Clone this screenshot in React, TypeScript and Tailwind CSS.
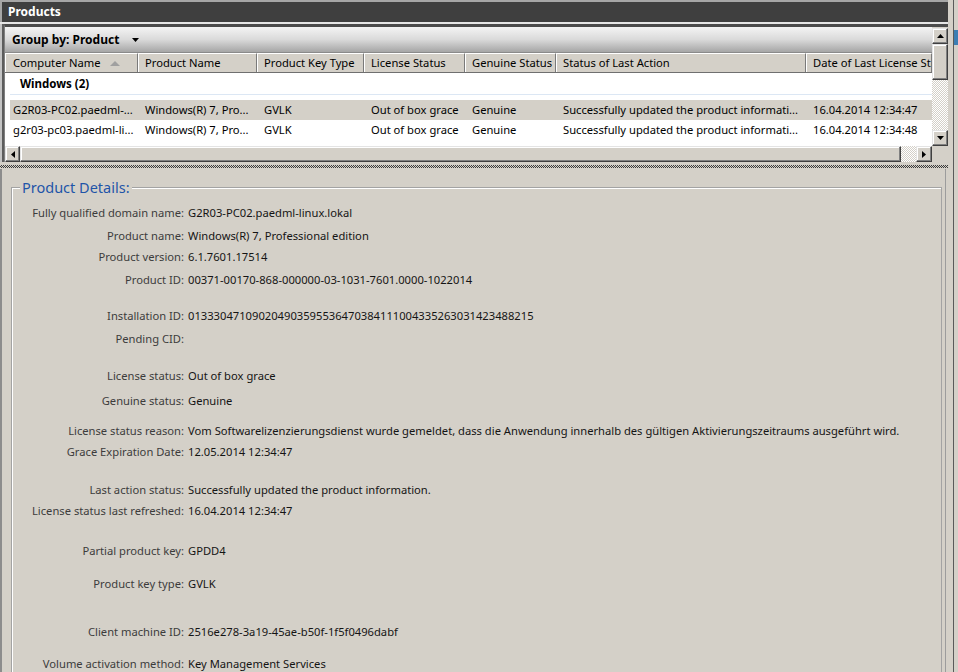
import React from "react";

const raised =
  "bg-[#d4d0c8] border border-t-[#e4e4e4] border-l-[#e4e4e4] border-r-[#404040] border-b-[#404040] shadow-[inset_-1px_-1px_0_#808080,inset_1px_1px_0_#ffffff]";
const checker = "bg-[repeating-conic-gradient(#d4d0c8_0_25%,#ffffff_0_50%)] bg-[length:2px_2px]";

const Arrow = ({ dir }: { dir: "up" | "down" | "left" | "right" }) => {
  const pts = {
    up: "0,4 7,4 3.5,0",
    down: "0,0 7,0 3.5,4",
    left: "4,0 4,7 0,3.5",
    right: "0,0 0,7 4,3.5",
  }[dir];
  const vertical = dir === "up" || dir === "down";
  return (
    <svg width={vertical ? 7 : 4} height={vertical ? 4 : 7} viewBox={vertical ? "0 0 7 4" : "0 0 4 7"}>
      <polygon points={pts} fill="#000" />
    </svg>
  );
};

const columns = [
  { title: "Computer Name", w: "w-[133px]", dw: "w-[128px] pl-[3px]" },
  { title: "Product Name", w: "w-[119px]", dw: "w-[119px] pl-[7px]" },
  { title: "Product Key Type", w: "w-[107px]", dw: "w-[107px] pl-[7px]" },
  { title: "License Status", w: "w-[101px]", dw: "w-[101px] pl-[7px]" },
  { title: "Genuine Status", w: "w-[91px]", dw: "w-[91px] pl-[7px]" },
  { title: "Status of Last Action", w: "w-[250px]", dw: "w-[250px] pl-[7px]" },
  { title: "Date of Last License Status", w: "flex-1", dw: "flex-1 pl-[7px]" },
];

const products = [
  {
    cells: [
      "G2R03-PC02.paedml-...",
      "Windows(R) 7, Pro...",
      "GVLK",
      "Out of box grace",
      "Genuine",
      "Successfully updated the product informati...",
      "16.04.2014 12:34:47",
    ],
    selected: true,
  },
  {
    cells: [
      "g2r03-pc03.paedml-li...",
      "Windows(R) 7, Pro...",
      "GVLK",
      "Out of box grace",
      "Genuine",
      "Successfully updated the product informati...",
      "16.04.2014 12:34:48",
    ],
    selected: false,
  },
];

const details = [
  { label: "Fully qualified domain name:", value: "G2R03-PC02.paedml-linux.lokal", mt: "mt-[6px]" },
  { label: "Product name:", value: "Windows(R) 7, Professional edition", mt: "mt-[2px]" },
  { label: "Product version:", value: "6.1.7601.17514", mt: "mt-0" },
  { label: "Product ID:", value: "00371-00170-868-000000-03-1031-7601.0000-1022014", mt: "mt-[2px]" },
  { label: "Installation ID:", value: "013330471090204903595536470384111004335263031423488215", mt: "mt-[15px]" },
  { label: "Pending CID:", value: "", mt: "mt-[2px]" },
  { label: "License status:", value: "Out of box grace", mt: "mt-[16px]" },
  { label: "Genuine status:", value: "Genuine", mt: "mt-[4px]" },
  {
    label: "License status reason:",
    value:
      "Vom Softwarelizenzierungsdienst wurde gemeldet, dass die Anwendung innerhalb des gültigen Aktivierungszeitraums ausgeführt wird.",
    mt: "mt-[9px]",
  },
  { label: "Grace Expiration Date:", value: "12.05.2014 12:34:47", mt: "mt-0" },
  { label: "Last action status:", value: "Successfully updated the product information.", mt: "mt-[17px]" },
  { label: "License status last refreshed:", value: "16.04.2014 12:34:47", mt: "mt-0" },
  { label: "Partial product key:", value: "GPDD4", mt: "mt-[19px]" },
  { label: "Product key type:", value: "GVLK", mt: "mt-[12px]" },
  { label: "Client machine ID:", value: "2516e278-3a19-45ae-b50f-1f5f0496dabf", mt: "mt-[27px]" },
  { label: "Volume activation method:", value: "Key Management Services", mt: "mt-[11px]" },
];

export default function App() {
  return (
    <div className="w-[958px] h-[672px] overflow-hidden flex bg-[#d4d0c8] font-['Noto_Sans',sans-serif] text-[11.2px] text-black">
      <div className="w-[948px] flex flex-col">
        <div className="h-[22px] shrink-0 border-t-2 border-l-2 border-[#a6a6a6] bg-[#3f3f3f] text-white font-bold text-[12px] pl-[6px] flex items-center">
          Products
        </div>
        <div className="h-[2px] shrink-0 bg-[#e6e6e6]" />

        {/* list pane */}
        <div className="flex shrink-0">
          <div className="w-[2px] bg-[#c4c4c4]" />
          <div className="w-[2px] bg-[#5c5c5c]" />
          <div className="w-[944px] flex flex-col border-t-[3px] border-t-[#4b4b4b] border-l border-l-[#808080]">
            <div className="flex h-[119px]">
              <div className="w-[927px] flex flex-col bg-white">
                <div className="h-[26px] flex items-center pl-[7px] gap-[13px] font-bold text-[12px] bg-linear-to-b from-[#f4f4f4] via-[#dadada] to-[#a6a6a6] border-b border-[#8a8a8a]">
                  <span>Group by: Product</span>
                  <Arrow dir="down" />
                </div>
                <div className="h-[20px] flex bg-[#d4d0c8] border-b border-[#6f6f6f]">
                  {columns.map((c, i) => (
                    <div
                      key={c.title}
                      className={`${c.w} flex items-center whitespace-nowrap overflow-hidden border-l border-t border-white border-r border-r-[#7a7a7a] ${i === 0 ? "pl-[7px]" : "pl-[6px]"}`}
                    >
                      <span>{c.title}</span>
                      {i === 0 && (
                        <svg className="ml-[9px]" width="10" height="5" viewBox="0 0 10 5">
                          <polygon points="0,5 10,5 5,0" fill="#a0a0a0" />
                        </svg>
                      )}
                    </div>
                  ))}
                </div>
                <div className="flex-1 flex flex-col">
                  <div className="h-[22px] flex items-center pl-[10px] font-bold text-[11.5px] border-b border-[#dce7f4] ml-[5px]">
                    Windows (2)
                  </div>
                  <div className="mt-[5px] pl-[5px]">
                    {products.map((p, r) => (
                      <div key={r} className={`h-[20px] flex items-center ${p.selected ? "bg-[#d4d0c8]" : "bg-white"}`}>
                        {p.cells.map((v, i) => (
                          <div key={i} className={`${columns[i].dw} whitespace-nowrap overflow-hidden`}>
                            {v}
                          </div>
                        ))}
                      </div>
                    ))}
                  </div>
                </div>
              </div>
              {/* vertical scrollbar */}
              <div className="w-[16px] flex flex-col pt-[1px] bg-[#d4d0c8]">
                <div className={`h-[16px] flex items-center justify-center ${raised}`}>
                  <Arrow dir="up" />
                </div>
                <div className={`h-[36px] ${raised}`} />
                <div className={`flex-1 ${checker}`} />
                <div className={`h-[16px] flex items-center justify-center ${raised}`}>
                  <Arrow dir="down" />
                </div>
              </div>
            </div>
            {/* horizontal scrollbar */}
            <div className="h-[16px] flex">
              <div className={`w-[15px] flex items-center justify-center ${raised}`}>
                <Arrow dir="left" />
              </div>
              <div className={`w-[881px] ${raised}`} />
              <div className={`w-[15px] ${checker}`} />
              <div className={`w-[16px] flex items-center justify-center ${raised}`}>
                <Arrow dir="right" />
              </div>
              <div className="w-[16px] bg-[#d4d0c8]" />
            </div>
          </div>
        </div>

        {/* splitter */}
        <div className="h-[3px] shrink-0" />
        <div className="h-[3px] shrink-0 bg-[repeating-conic-gradient(#3a3a3a_0_25%,#d4d0c8_0_50%)] bg-[length:2px_2px]" />
        <div className="h-[1px] shrink-0" />

        {/* details */}
        <div className="flex-1 w-[946px] border-l-2 border-l-[#8c8c8c] border-r border-r-[#9c9c9c] overflow-hidden">
          <fieldset className="ml-[9px] mt-[8px] w-[931px] h-[600px] border border-[#a3a3a3] shadow-[inset_1px_1px_0_#ffffff]">
            <legend className="ml-[8px] px-[2px] text-[14.5px] leading-[20px] text-[#1f55a8] bg-[#d4d0c8]">
              Product Details:
            </legend>
            {details.map((d) => (
              <div key={d.label} className={`${d.mt} h-[21px] flex items-center whitespace-nowrap`}>
                <div className="w-[172px] shrink-0 text-right text-[#3c3c3c]">{d.label}</div>
                <div className="ml-[4px] text-[#141414]">{d.value}</div>
              </div>
            ))}
          </fieldset>
        </div>
      </div>

      {/* right frame strip */}
      <div className="w-[5px] bg-[#d4d0c8]" />
      <div className="w-[5px] border-l border-[#5a5a5a] bg-[#d4d0c8] flex flex-col">
        <div className="mt-[30px] h-[15px] bg-[#3d7eb3]" />
      </div>
    </div>
  );
}
